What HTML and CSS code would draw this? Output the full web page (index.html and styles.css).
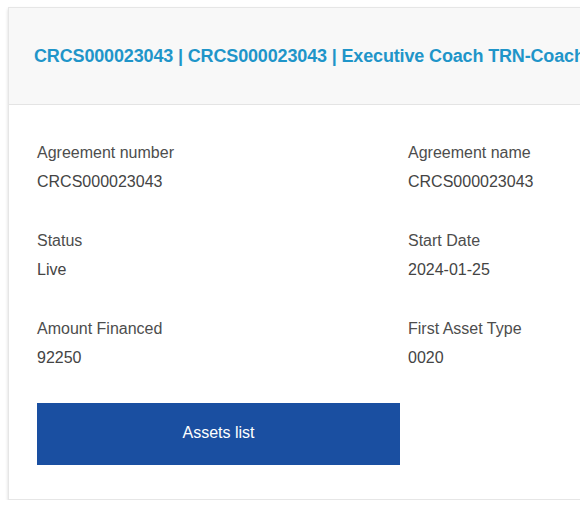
FILE: index.html
```html
<!DOCTYPE html>
<html lang="en">
<head>
<meta charset="utf-8">
<title>Agreement</title>
<link rel="stylesheet" href="styles.css">
</head>
<body>
<section class="card">
  <header class="card-header">
    <h2 class="card-title">CRCS000023043 | CRCS000023043 | Executive Coach TRN-Coach</h2>
  </header>
  <div class="card-body">
    <dl class="fields">
      <div class="field"><dt>Agreement number</dt><dd>CRCS000023043</dd></div>
      <div class="field"><dt>Agreement name</dt><dd>CRCS000023043</dd></div>
      <div class="field"><dt>Status</dt><dd>Live</dd></div>
      <div class="field"><dt>Start Date</dt><dd>2024-01-25</dd></div>
      <div class="field"><dt>Amount Financed</dt><dd>92250</dd></div>
      <div class="field"><dt>First Asset Type</dt><dd>0020</dd></div>
    </dl>
    <button class="btn-primary" type="button">Assets list</button>
  </div>
</section>
</body>
</html>
```
FILE: styles.css
```css
html, body {
  overflow: hidden;
}
body {
  margin: 0;
  padding: 7px 0 0 8px;
  background: #ffffff;
  font-family: "Liberation Sans", Arial, sans-serif;
  color: #4a4a4a;
}
.card {
  width: 800px;
  background: #ffffff;
  border: 1px solid #e6e6e6;
  box-shadow: 0 2px 3px rgba(0, 0, 0, 0.16);
}
.card-header {
  background: #f8f8f8;
  border-bottom: 1px solid #e4e4e4;
  padding: 37px 0 37px 25px;
}
.card-title {
  margin: 0;
  font-size: 18px;
  line-height: 22px;
  font-weight: bold;
  letter-spacing: -0.15px;
  color: #1f95c9;
  white-space: nowrap;
}
.card-body {
  padding: 38px 0 34px 28px;
}
.fields {
  margin: 0;
  display: grid;
  grid-template-columns: 371px 371px;
  row-gap: 39px;
}
.field dt {
  font-size: 16px;
  line-height: 20px;
  color: #4d4d4d;
}
.field dd {
  margin: 9px 0 0;
  font-size: 16px;
  line-height: 20px;
  color: #444444;
}
.btn-primary {
  display: block;
  margin-top: 35px;
  width: 363px;
  height: 62px;
  padding: 0 0 2px;
  border: 0;
  background: #1a4fa1;
  color: #ffffff;
  font-family: "Liberation Sans", Arial, sans-serif;
  font-size: 16px;
  line-height: 20px;
}
```
